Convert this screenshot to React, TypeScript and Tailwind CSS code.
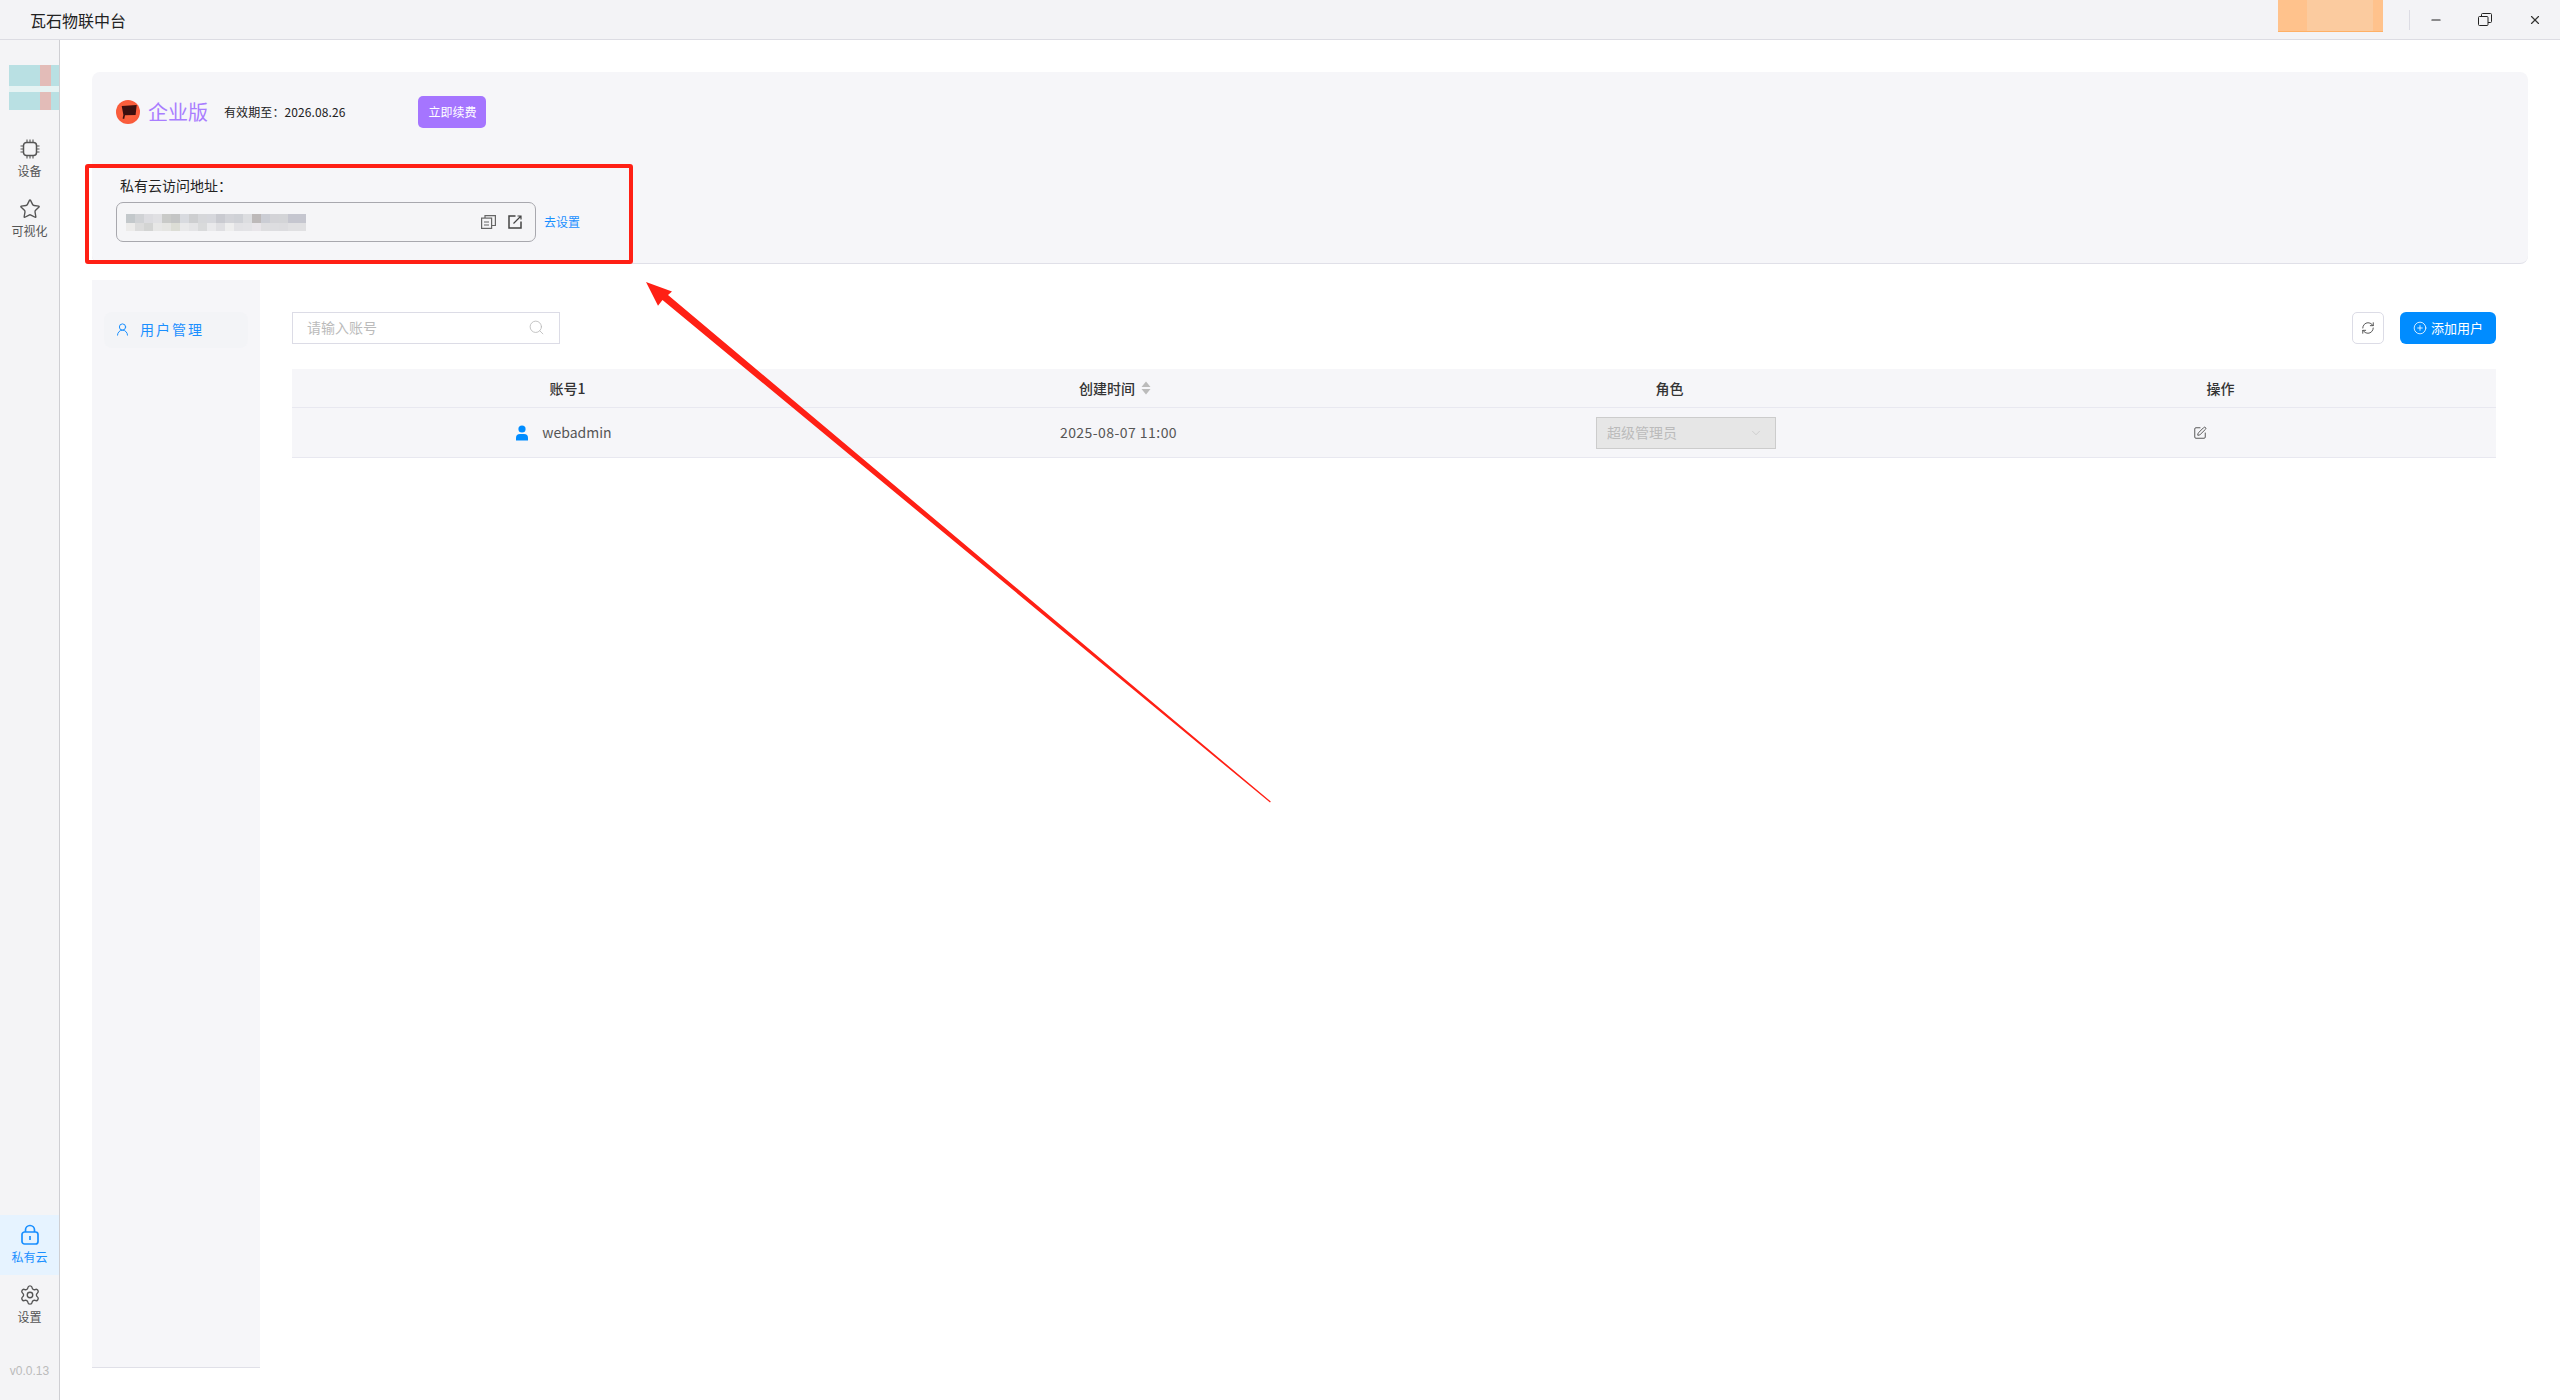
import React from 'react';
import { ChevronDown, CirclePlus, Minus, RefreshCw, Search, Settings, SquarePen, Star, UserRound, X } from 'lucide-react';

const mosaicTop = [
  'bg-[#c3c8cb]', 'bg-[#d0d2d5]', 'bg-[#dcdce0]', 'bg-[#e0e0e3]', 'bg-[#c9cac8]', 'bg-[#c4c5c5]', 'bg-[#d8dadf]', 'bg-[#cdced0]',
  'bg-[#d6d7da]', 'bg-[#d6d7dc]', 'bg-[#c9cad0]', 'bg-[#d2d3d8]', 'bg-[#cfd1d6]', 'bg-[#dcdde0]', 'bg-[#bdb9b9]', 'bg-[#cbcdd4]',
  'bg-[#d3d3d7]', 'bg-[#d3d4d7]', 'bg-[#c5c6cf]', 'bg-[#c5c6cf]',
];
const mosaicBottom = [
  'bg-[#ecebea]', 'bg-[#dcdcdc]', 'bg-[#d3d4d3]', 'bg-[#e7e7e6]', 'bg-[#e5e5e2]', 'bg-[#dcddd5]', 'bg-[#e9e9ea]', 'bg-[#e4e4e6]',
  'bg-[#d9dadb]', 'bg-[#e9e9eb]', 'bg-[#dfdfe2]', 'bg-[#eeeeee]', 'bg-[#e2e2e5]', 'bg-[#e3e3e6]', 'bg-[#e8e5e9]', 'bg-[#dedee0]',
  'bg-[#dddde0]', 'bg-[#dcdcdf]', 'bg-[#e0e0e2]', 'bg-[#e0e0e2]',
];

const NavItem = ({ icon, label, active }: { icon: React.ReactNode; label: string; active?: boolean }) => (
  <div className={`flex h-[60px] flex-col items-center justify-center gap-[2px] ${active ? 'bg-[#e6f3ff] text-[#1a8fff]' : 'text-[#555]'}`}>
    {icon}
    <span className="text-[12px] leading-[18px]">{label}</span>
  </div>
);

const ChipIcon = () => (
  <svg width="22" height="22" viewBox="0 0 22 22" fill="none" stroke="currentColor" strokeWidth="1.5">
    <rect x="4.5" y="4.5" width="13" height="13" rx="3" />
    <path d="M8 1.5v3M11 1.5v3M14 1.5v3M8 17.5v3M11 17.5v3M14 17.5v3M1.5 8h3M1.5 11h3M1.5 14h3M17.5 8h3M17.5 11h3M17.5 14h3" strokeWidth="1.1" />
  </svg>
);

const LockIcon = () => (
  <svg width="20" height="22" viewBox="0 0 20 22" fill="none" stroke="currentColor" strokeWidth="1.7">
    <rect x="2" y="8" width="16" height="12" rx="2.5" />
    <path d="M5.5 8V6a4.5 4.5 0 0 1 9 0v2" />
    <path d="M10 12v4" />
  </svg>
);

const CopyIcon = () => (
  <svg width="15" height="14" viewBox="0 0 15 14" fill="none" stroke="#666" strokeWidth="1.2">
    <rect x="0.6" y="3.1" width="10" height="10.3" />
    <path d="M4 3V0.6h10.4V10.5h-3.6" />
    <path d="M3 7h5M3 10h5" />
  </svg>
);

const OpenIcon = () => (
  <svg width="14" height="14" viewBox="0 0 14 14" fill="none" stroke="#444" strokeWidth="1.5">
    <path d="M7.5 1H1v12h12V6.5" />
    <path d="M5.5 8.5 13 1M9.5 1H13v3.5" strokeWidth="1.2" />
  </svg>
);

const RestoreIcon = () => (
  <svg width="14" height="13" viewBox="0 0 14 13" fill="none" stroke="#222" strokeWidth="1">
    <rect x="0.5" y="3.5" width="9.5" height="9" rx="1" />
    <path d="M3.5 3.5V1.5a1 1 0 0 1 1-1h8a1 1 0 0 1 1 1v7a1 1 0 0 1-1 1H10" />
  </svg>
);

const FlagBadge = () => (
  <svg width="24" height="24" viewBox="0 0 24 24">
    <defs>
      <radialGradient id="badge" cx="0.5" cy="0.5" r="0.55">
        <stop offset="0" stopColor="#ff6a40" />
        <stop offset="1" stopColor="#f8583a" />
      </radialGradient>
    </defs>
    <circle cx="12" cy="12" r="12" fill="url(#badge)" />
    <path d="M5.7 6 20.7 5 19.6 15 9 15.2 8.2 19 6.6 18.6 7.4 15z" fill="#3c0f0f" />
  </svg>
);

const SortCaret = () => (
  <svg width="10" height="14" viewBox="0 0 10 14" fill="#bbb">
    <path d="M5 0.5 9.5 6h-9zM5 13.5.5 8h9z" />
  </svg>
);

const UserFill = () => (
  <svg width="14" height="16" viewBox="0 0 14 16" fill="#008cff">
    <circle cx="7" cy="4" r="3.6" />
    <path d="M1 15.5V13a4 4 0 0 1 4-4h4a4 4 0 0 1 4 4v2.5z" />
  </svg>
);

// 标注层：截图上的红框和箭头
const Annotation = () => (
  <svg className="pointer-events-none absolute left-0 top-0" width="2560" height="1400" viewBox="0 0 2560 1400">
    <rect x="87" y="166" width="544" height="96" fill="none" stroke="#ff2015" strokeWidth="4" rx="1" />
    <path d="M646 282 672 291.4 668 295 1270.8 801.6 1270 802.6 662.5 300 658 305.7z" fill="#ff2015" />
  </svg>
);

const App = () => {
  return (
    <div className="relative flex h-[1400px] w-[2560px] flex-col overflow-hidden bg-white font-['Noto_Sans_CJK_SC','Noto_Sans',sans-serif] text-[#333]">
      {/* 标题栏 */}
      <header className="flex h-[40px] items-center border-b border-[#dcdce3] bg-[#f3f3f6] pl-[30px]">
        <span className="text-[16px] leading-[40px] text-[#222]">瓦石物联中台</span>
        <div className="ml-auto flex h-full items-center">
          <div className="relative mb-[7px] flex h-[32px] w-[105px] border-b-[1px] border-[#ffb066] bg-[#ffc28c]">
            <div className="ml-[29px] h-full w-[66px] bg-[#fbcb9f]" />
          </div>
          <div className="ml-[26px] h-[20px] w-px bg-[#dcdce4]" />
          <div className="flex w-[50px] justify-center pl-[2px]"><Minus size={14} color="#222" /></div>
          <div className="flex w-[50px] justify-center"><RestoreIcon /></div>
          <div className="flex w-[50px] justify-center"><X size={14} color="#333" /></div>
        </div>
      </header>

      <div className="flex flex-1">
        {/* 左侧导航 */}
        <aside className="flex w-[60px] flex-col border-r border-[#cfcfd3] bg-[#f4f4f6]">
          <div className="ml-[9px] mt-[25px] flex h-[45px] w-[50px] flex-col">
            <div className="flex h-[21px] bg-[#b9e0e3]"><div className="ml-[31px] w-[11px] bg-[#e3bcb8]" /></div>
            <div className="h-[6px] bg-[#e6f3f3]" />
            <div className="flex h-[18px] bg-[#b9e0e3]"><div className="ml-[31px] w-[11px] bg-[#e3bcb8]" /></div>
          </div>
          <div className="mt-[19px]">
            <NavItem icon={<ChipIcon />} label="设备" />
          </div>
          <NavItem icon={<Star size={22} strokeWidth={1.5} />} label="可视化" />
          <div className="mt-auto">
            <NavItem active icon={<LockIcon />} label="私有云" />
            <NavItem icon={<Settings size={22} strokeWidth={1.5} />} label="设置" />
          </div>
          <div className="mb-[20px] mt-[27px] text-center font-['Liberation_Sans',sans-serif] text-[12px] leading-[18px] text-[#bbb]">v0.0.13</div>
        </aside>

        {/* 主区域 */}
        <main className="flex flex-1 flex-col gap-[16px] px-[32px] pb-[32px] pt-[32px]">
          <section className="h-[192px] rounded-[8px] border-b border-[#e0e0e8] bg-[#f6f6f9] pl-[24px] pt-[24px]">
            <div className="flex h-[32px] items-center">
              <FlagBadge />
              <span className="ml-[8px] text-[20px] leading-[32px] text-[#a97dff]">企业版</span>
              <span className="ml-[16px] text-[12px] tracking-[0.1px] text-[#222]">有效期至：2026.08.26</span>
              <button className="ml-[73px] h-[32px] w-[68px] rounded-[5px] bg-[#a575ff] text-[12px] text-white">立即续费</button>
            </div>
            <div className="ml-[4px] mt-[47px] text-[14px] leading-[20px] text-[#222]">私有云访问地址：</div>
            <div className="mt-[7px] flex items-center">
              <div className="flex h-[40px] w-[420px] items-center rounded-[7px] border border-[#a8a8ae] bg-[#f5f5f7] pl-[9px]">
                <div className="w-[180px]">
                  <div className="flex h-[9px]">{mosaicTop.map((c, i) => <div key={i} className={`h-full w-[9px] ${c}`} />)}</div>
                  <div className="flex h-[8px]">{mosaicBottom.map((c, i) => <div key={i} className={`h-full w-[9px] ${c}`} />)}</div>
                </div>
                <div className="ml-auto flex items-center gap-[12px] pr-[13px]">
                  <CopyIcon />
                  <OpenIcon />
                </div>
              </div>
              <span className="ml-[8px] text-[12px] text-[#1a8fff]">去设置</span>
            </div>
          </section>

          <section className="flex flex-1">
            {/* 二级菜单 */}
            <div className="w-[168px] border-b border-[#e0e0e8] bg-[#f6f6f9] px-[12px] pt-[32px]">
              <div className="flex h-[36px] items-center rounded-[8px] bg-[#f3f4f7] pb-[2px] pl-[11px] text-[#1a8fff]">
                <UserRound size={15} strokeWidth={1.6} />
                <span className="ml-[10px] text-[14px] tracking-[2px]">用户管理</span>
              </div>
            </div>

            {/* 用户表格 */}
            <div className="flex-1 px-[32px] pt-[32px]">
              <div className="flex items-center justify-between">
                <div className="flex h-[32px] w-[268px] items-center border border-[#dcdce6] pb-[1px] pl-[14px] pr-[14px]">
                  <span className="text-[14px] text-[#bbb]">请输入账号</span>
                  <Search size={17} strokeWidth={1.2} color="#bbb" className="ml-auto" />
                </div>
                <div className="flex items-center gap-[16px]">
                  <button className="flex h-[32px] w-[32px] items-center justify-center rounded-[5px] border border-[#dcdce6] bg-white">
                    <RefreshCw size={14} strokeWidth={1.5} color="#444" />
                  </button>
                  <button className="flex h-[32px] w-[96px] items-center justify-center gap-[4px] rounded-[6px] bg-[#008cff] text-[13px] text-white">
                    <CirclePlus size={14} strokeWidth={1.4} />
                    添加用户
                  </button>
                </div>
              </div>

              <div className="mt-[25px] bg-[#f6f6f9]">
                <div className="grid h-[39px] grid-cols-4 items-center border-b border-[#e8e8f0] text-center text-[14px] font-medium text-[#333]">
                  <div>账号1</div>
                  <div className="flex items-center justify-center gap-[6px] pr-[7px]">创建时间<SortCaret /></div>
                  <div>角色</div>
                  <div>操作</div>
                </div>
                <div className="grid h-[50px] grid-cols-4 items-center border-b border-[#e8e8f0] text-center text-[14px] text-[#555]">
                  <div className="flex items-center justify-center gap-[13px] pr-[8px]"><UserFill />webadmin</div>
                  <div className="tracking-[0.45px]">2025-08-07 11:00</div>
                  <div className="flex justify-center pl-[33px]">
                    <div className="flex h-[32px] w-[180px] items-center justify-between border border-[#ccc] bg-[#e6e6e6] pl-[10px] pr-[12px] text-[#bbb]">
                      超级管理员
                      <ChevronDown size={14} strokeWidth={1} />
                    </div>
                  </div>
                  <div className="flex justify-center pr-[41px]"><SquarePen size={14} strokeWidth={1.5} color="#444" /></div>
                </div>
              </div>
            </div>
          </section>
        </main>
      </div>

      <Annotation />
    </div>
  );
};

export default App;
